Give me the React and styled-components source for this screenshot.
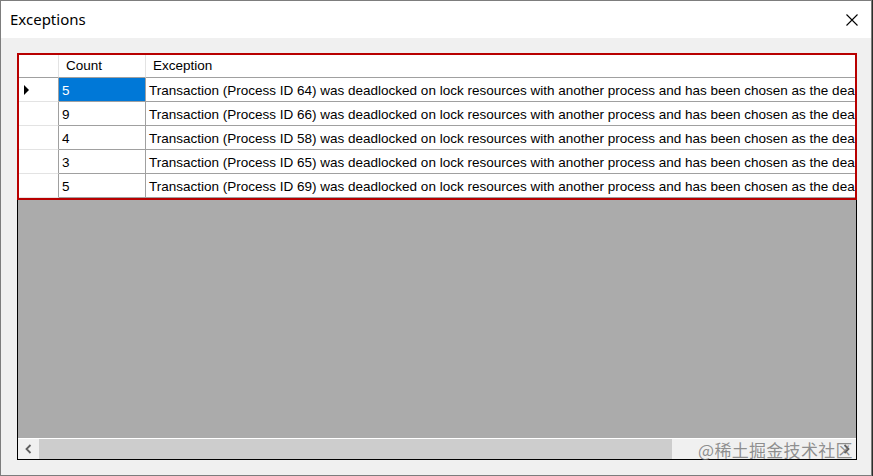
import React from "react";
import styled, { createGlobalStyle } from "styled-components";

const GlobalStyle = createGlobalStyle`
  html, body { margin: 0; padding: 0; background: #2b2f2b; }
  body { width: 873px; height: 476px; overflow: hidden; }
`;

const Window = styled.div`
  width: 872px;
  height: 476px;
  box-sizing: border-box;
  border: 1px solid #7d7d7d;
  background: #f0f0f0;
  display: flex;
  flex-direction: column;
  position: relative;
`;

const TitleBar = styled.div`
  height: 37px;
  background: #ffffff;
  display: flex;
  align-items: center;
  justify-content: space-between;
  padding: 0 13px 0 9px;
  box-sizing: border-box;
`;

const Title = styled.span`
  font-family: "Noto Sans", "Open Sans", sans-serif;
  font-size: 15px;
  color: #000;
  padding-bottom: 1px;
`;

const Close = styled.svg`
  width: 12px;
  height: 12px;
  display: block;
`;

const Body = styled.div`
  flex: 1;
  padding: 15px 14px 15px 16px;
  display: flex;
`;

const Grid = styled.div`
  flex: 1;
  border: 1px solid #000;
  background: #ababab;
  display: flex;
  flex-direction: column;
  overflow: hidden;
  font-family: "Liberation Sans", Arial, sans-serif;
  font-size: 13.5px;
  color: #000;
`;

const Row = styled.div`
  display: grid;
  grid-template-columns: 41px 87px 1fr;
  height: 24px;
  background: #fff;
`;

const Cell = styled.div`
  box-sizing: border-box;
  border-right: 1px solid ${(p) => (p.$head ? "#e3e3e3" : "#a0a0a0")};
  border-bottom: 1px solid #a0a0a0;
  padding: ${(p) => (p.$head ? "1px 0 0 7px" : "2px 0 0 3px")};
  line-height: 21px;
  white-space: nowrap;
  overflow: hidden;
  background: ${(p) => (p.$sel ? "#0078d7" : "#fff")};
  color: ${(p) => (p.$sel ? "#fff" : "#000")};
`;

const RowHead = styled.div`
  box-sizing: border-box;
  border-right: 1px solid ${(p) => (p.$head ? "#e3e3e3" : "#a0a0a0")};
  border-bottom: 1px solid ${(p) => (p.$head ? "#a0a0a0" : "#e3e3e3")};
  display: flex;
  align-items: center;
  padding-left: 6px;
  background: #fff;
`;

const Filler = styled.div`
  flex: 1;
  border-bottom: 1px solid #ffffff;
`;

const HScroll = styled.div`
  height: 20px;
  display: flex;
  background: #f0f0f0;
`;

const ScrollBtn = styled.div`
  width: 21px;
  display: flex;
  align-items: center;
  justify-content: center;
  background: #f0f0f0;
`;

const Thumb = styled.div`
  width: 633px;
  background: #cdcdcd;
`;

const Track = styled.div`
  flex: 1;
`;

const Annotation = styled.div`
  position: absolute;
  left: 16px;
  top: 52px;
  width: 840px;
  height: 147px;
  box-sizing: border-box;
  border: 2px solid #b80000;
  pointer-events: none;
`;

const Watermark = styled.div`
  position: absolute;
  left: 697px;
  top: 438px;
  font-family: "Noto Sans CJK SC", sans-serif;
  font-size: 17px;
  line-height: 22px;
  color: rgba(110, 110, 110, 0.75);
  letter-spacing: 0.3px;
  pointer-events: none;
`;

const rows = [
  { count: 5, id: 64 },
  { count: 9, id: 66 },
  { count: 4, id: 58 },
  { count: 3, id: 65 },
  { count: 5, id: 69 },
];

const msg = (id) =>
  `Transaction (Process ID ${id}) was deadlocked on lock resources with another process and has been chosen as the deadlock victim. Rerun the transaction.`;

export default function App() {
  return (
    <>
      <GlobalStyle />
      <Window>
        <TitleBar>
          <Title>Exceptions</Title>
          <Close viewBox="0 0 12 12">
            <path d="M0.5 0.5 L11.5 11.5 M11.5 0.5 L0.5 11.5" stroke="#000" strokeWidth="1.1" fill="none" />
          </Close>
        </TitleBar>
        <Body>
          <Grid>
            <Row>
              <RowHead $head />
              <Cell $head>Count</Cell>
              <Cell $head>Exception</Cell>
            </Row>
            {rows.map((r, i) => (
              <Row key={i}>
                <RowHead>
                  {i === 0 && (
                    <svg width="6" height="10" viewBox="0 0 6 10">
                      <polygon points="0,0 5,5 0,10" fill="#000" />
                    </svg>
                  )}
                </RowHead>
                <Cell $sel={i === 0}>{r.count}</Cell>
                <Cell>{msg(r.id)}</Cell>
              </Row>
            ))}
            <Filler />
            <HScroll>
              <ScrollBtn>
                <svg width="8" height="10" viewBox="0 0 8 10">
                  <path d="M5.5 1 L1.5 5 L5.5 9" stroke="#606060" strokeWidth="1.8" fill="none" />
                </svg>
              </ScrollBtn>
              <Thumb />
              <Track />
              <ScrollBtn>
                <svg width="8" height="10" viewBox="0 0 8 10">
                  <path d="M2.5 1 L6.5 5 L2.5 9" stroke="#606060" strokeWidth="1.8" fill="none" />
                </svg>
              </ScrollBtn>
            </HScroll>
          </Grid>
        </Body>
        <Annotation />
        <Watermark>@稀土掘金技术社区</Watermark>
      </Window>
    </>
  );
}
